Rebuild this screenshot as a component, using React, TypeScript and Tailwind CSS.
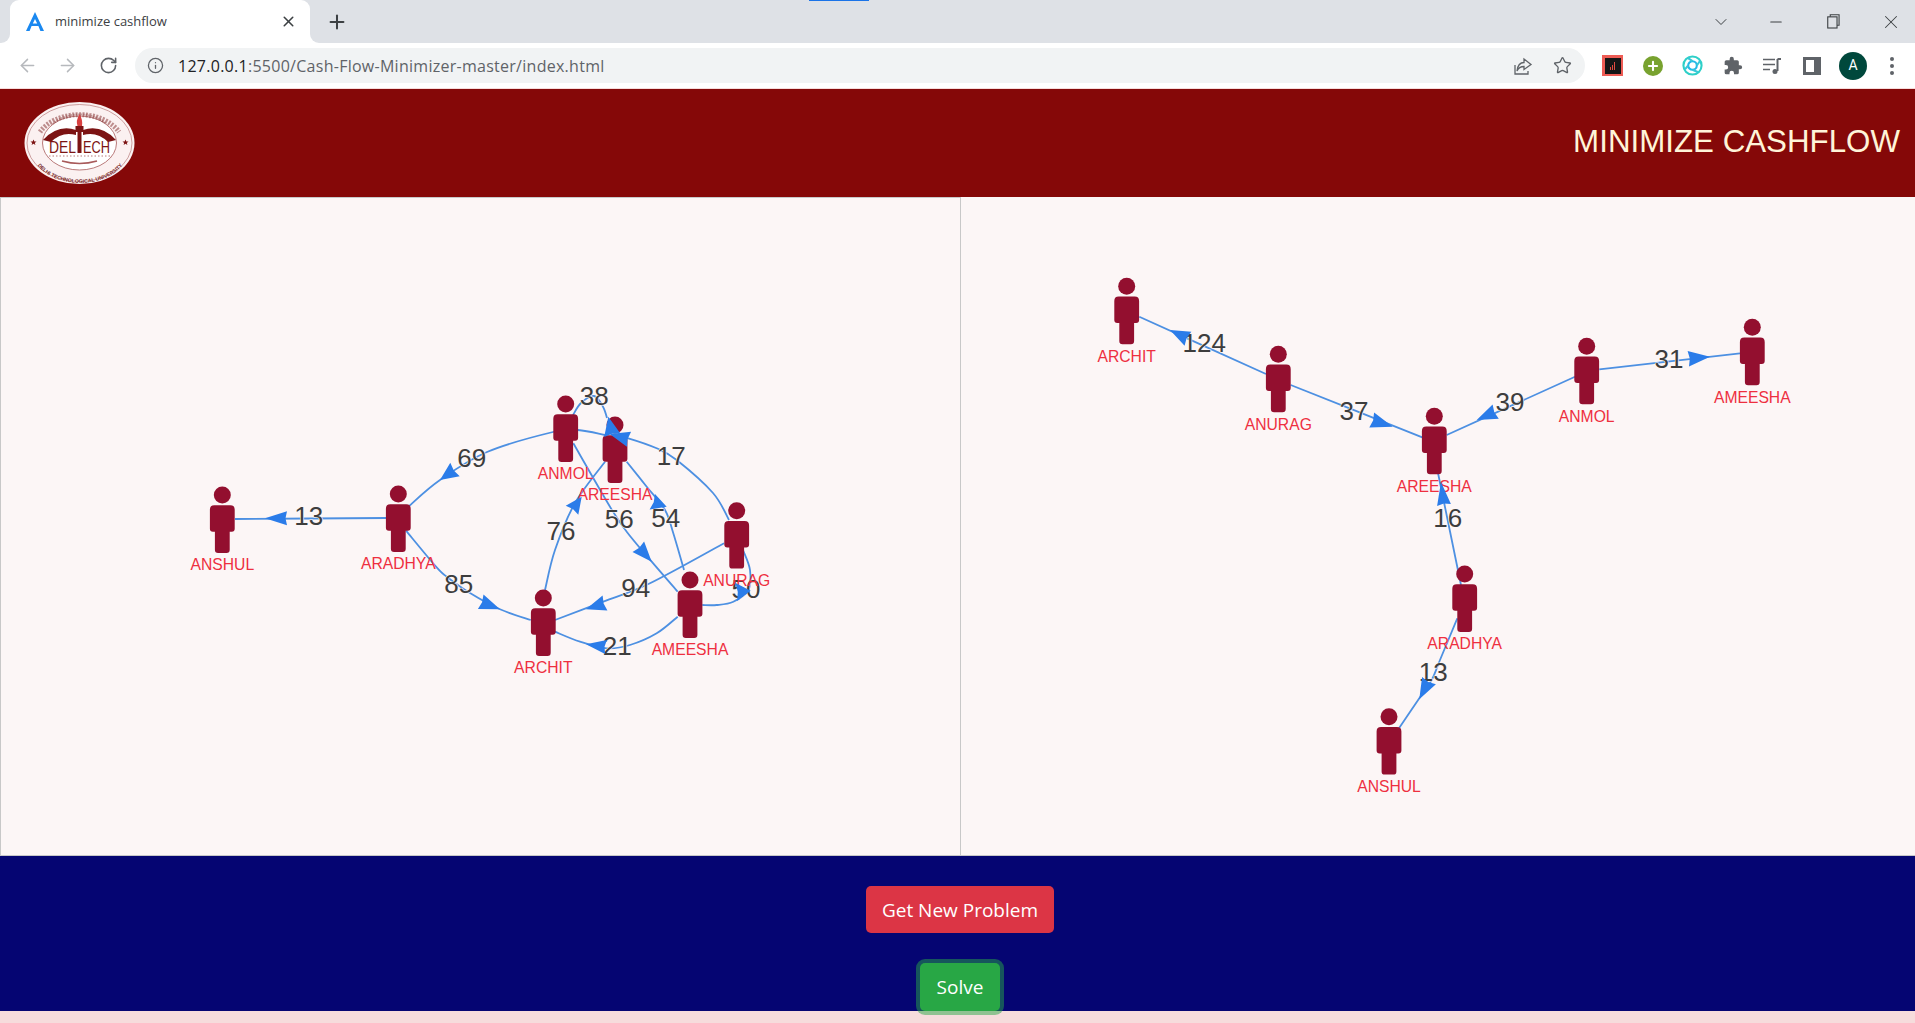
import React from "react";
import { ArrowLeft, ArrowRight, RotateCw, Info, Star, X, Plus, ChevronDown, Minus } from "lucide-react";

type P = [number, number];
const EDGE = "#4d90e2";
const ARROW = "#2b7ce9";

function smooth(pts: P[]): string {
  let d = `M${pts[0][0]} ${pts[0][1]}`;
  for (let i = 0; i < pts.length - 1; i++) {
    const p0 = pts[Math.max(i - 1, 0)];
    const p1 = pts[i];
    const p2 = pts[i + 1];
    const p3 = pts[Math.min(i + 2, pts.length - 1)];
    const c1: P = [p1[0] + (p2[0] - p0[0]) / 6, p1[1] + (p2[1] - p0[1]) / 6];
    const c2: P = [p2[0] - (p3[0] - p1[0]) / 6, p2[1] - (p3[1] - p1[1]) / 6];
    d += ` C${c1[0]} ${c1[1]} ${c2[0]} ${c2[1]} ${p2[0]} ${p2[1]}`;
  }
  return d;
}

function arrowPoints(tip: P, base: P, w = 15.5): string {
  const dx = tip[0] - base[0];
  const dy = tip[1] - base[1];
  const l = Math.hypot(dx, dy) || 1;
  const ux = dx / l;
  const uy = dy / l;
  const nx = -uy;
  const ny = ux;
  const h = w / 2;
  const a: P = [base[0] + nx * h, base[1] + ny * h];
  const b: P = [base[0] - nx * h, base[1] - ny * h];
  const notch: P = [base[0] + ux * 1.5, base[1] + uy * 1.5];
  return [tip, a, notch, b].map((p) => `${p[0].toFixed(1)},${p[1].toFixed(1)}`).join(" ");
}

interface Edge {
  pts: P[];
  tip: P;
  base: P;
  label: string;
  at: P;
  w?: number;
}
interface Node {
  name: string;
  x: number;
  y: number;
}

function Person({ name, x, y }: Node) {
  return (
    <g>
      <circle cx={x} cy={y} r={8.5} fill="#930f2f" />
      <path
        d={`M${x - 8} ${y + 10.3} H${x + 8} Q${x + 12.4} ${y + 10.3} ${x + 12.4} ${y + 14.7} V${y + 33.7} Q${x + 12.4} ${y + 36.7} ${x + 9.4} ${y + 36.7} H${x + 7.4} V${y + 54.7} Q${x + 7.4} ${y + 57.9} ${x + 4.2} ${y + 57.9} H${x - 4.2} Q${x - 7.4} ${y + 57.9} ${x - 7.4} ${y + 54.7} V${y + 36.7} H${x - 9.4} Q${x - 12.4} ${y + 36.7} ${x - 12.4} ${y + 33.7} V${y + 14.7} Q${x - 12.4} ${y + 10.3} ${x - 8} ${y + 10.3} Z`}
        fill="#930f2f"
      />
      <text x={x} y={y + 75.3} textAnchor="middle" fontSize={15.7} fill="#ee2f3f">
        {name}
      </text>
    </g>
  );
}

function Graph({ nodes, edges, viewBox, className }: { nodes: Node[]; edges: Edge[]; viewBox: string; className: string }) {
  return (
    <svg viewBox={viewBox} className={className}>
      {edges.map((e, i) => (
        <path key={i} d={smooth(e.pts)} fill="none" stroke={EDGE} strokeWidth={1.8} />
      ))}
      {edges.map((e, i) => (
        <text
          key={i}
          x={e.at[0]}
          y={e.at[1] + 9}
          textAnchor="middle"
          fontSize={26}
          fill="#3d3d3d"
          stroke="#fcf6f6"
          strokeWidth={1.2}
          paintOrder="stroke"
        >
          {e.label}
        </text>
      ))}
      {nodes.map((n) => (
        <Person key={n.name} {...n} />
      ))}
      {edges.map((e, i) => (
        <polygon key={i} points={arrowPoints(e.tip, e.base, e.w)} fill={ARROW} />
      ))}
    </svg>
  );
}

const leftNodes: Node[] = [
  { name: "ANSHUL", x: 222.3, y: 495 },
  { name: "ARADHYA", x: 398.3, y: 494 },
  { name: "ANMOL", x: 565.7, y: 404 },
  { name: "AREESHA", x: 615, y: 425 },
  { name: "ANURAG", x: 736.7, y: 510.7 },
  { name: "AMEESHA", x: 690, y: 580 },
  { name: "ARCHIT", x: 543.3, y: 598 },
];

const leftEdges: Edge[] = [
  { pts: [[235, 519], [386, 518]], tip: [265, 518.3], base: [287, 518.3], label: "13", at: [308.7, 516], w: 14 },
  { pts: [[409, 506], [440, 480], [487, 452], [553, 432], [578, 430], [605, 435]], tip: [440, 480], base: [455, 469.5], label: "69", at: [471.7, 457.7], w: 16.5 },
  { pts: [[406, 530.7], [436, 566.7], [446.7, 576.7], [470, 593], [500, 609.3], [530.7, 620]], tip: [500, 609.3], base: [480.7, 601.7], label: "85", at: [458.7, 584] },
  { pts: [[545, 590], [555, 550], [575, 503], [605, 461.7]], tip: [581.7, 496.7], base: [572, 510.3], label: "76", at: [561, 531] },
  { pts: [[573.3, 443.3], [610, 506.7], [626.7, 531.7], [651.7, 561.7], [677.7, 591.7]], tip: [651.7, 561.7], base: [638.3, 546.7], label: "56", at: [619.3, 519] },
  { pts: [[626.7, 461.7], [646.7, 486.7], [665, 510], [673.3, 533.3], [684, 570]], tip: [666.7, 506.7], base: [652.3, 501.7], label: "54", at: [665.7, 517.7], w: 16.5 },
  { pts: [[573, 415], [581, 403], [594, 396], [603, 406.7], [607, 418]], tip: [608.3, 416.7], base: [612.3, 435.3], label: "38", at: [594.3, 395.7], w: 16.5 },
  { pts: [[729, 520], [713, 493], [676.7, 460], [656.7, 448.3], [628.3, 438.3], [612, 435]], tip: [609.7, 434], base: [629, 439.3], label: "17", at: [671.3, 456] },
  { pts: [[724, 543.3], [650, 583.3], [603.3, 601.7], [555, 620]], tip: [586, 609.3], base: [605, 603], label: "94", at: [635.7, 588.3] },
  { pts: [[677.7, 616.7], [656.7, 633.3], [630, 645], [606.7, 648.3], [580, 641.7], [555, 631.7]], tip: [586, 644.3], base: [606, 647], label: "21", at: [617.3, 645.7], w: 14 },
  { pts: [[743.3, 550.7], [750, 570], [748.3, 590], [733.3, 601.7], [716.7, 605], [702.3, 605]], tip: [750.7, 590.7], base: [736.3, 592], label: "50", at: [746, 589.3], w: 18 },
];

const rightNodes: Node[] = [
  { name: "ARCHIT", x: 1126.7, y: 286.3 },
  { name: "ANURAG", x: 1278.3, y: 354.3 },
  { name: "AREESHA", x: 1434.3, y: 416.3 },
  { name: "ANMOL", x: 1586.7, y: 346.3 },
  { name: "AMEESHA", x: 1752.3, y: 327.3 },
  { name: "ARADHYA", x: 1464.7, y: 574 },
  { name: "ANSHUL", x: 1389, y: 716.7 },
];

const rightEdges: Edge[] = [
  { pts: [[1139.3, 316.7], [1266, 374]], tip: [1170, 330], base: [1188, 338.7], label: "124", at: [1204.3, 342.7] },
  { pts: [[1290.7, 385], [1422.3, 437.3]], tip: [1392.7, 426.7], base: [1371.7, 420], label: "37", at: [1354, 411] },
  { pts: [[1446.7, 435], [1575, 376.7]], tip: [1476.7, 420], base: [1495.7, 411.7], label: "39", at: [1510, 402] },
  { pts: [[1599.3, 369.3], [1740, 353.3]], tip: [1710, 356.7], base: [1688.3, 358.7], label: "31", at: [1669, 358.7] },
  { pts: [[1461, 585], [1438, 473]], tip: [1441, 482], base: [1444, 505], label: "16", at: [1447.7, 518.3], w: 14 },
  { pts: [[1457.3, 618.3], [1440, 660], [1431.7, 680], [1419.3, 698.3], [1399, 728.3]], tip: [1419.3, 699.3], base: [1429, 680.7], label: "13", at: [1433.3, 672.3] },
];

function LogoStar({ x, y }: { x: number; y: number }) {
  return (
    <polygon
      points={`${x},${y - 3} ${x + 0.9},${y - 0.9} ${x + 3},${y - 0.9} ${x + 1.3},${y + 0.5} ${x + 1.9},${y + 2.6} ${x},${y + 1.3} ${x - 1.9},${y + 2.6} ${x - 1.3},${y + 0.5} ${x - 3},${y - 0.9} ${x - 0.9},${y - 0.9}`}
      fill="#7c1414"
    />
  );
}

function Logo() {
  return (
    <svg viewBox="0 0 120 90" className="w-[120px] h-[90px]">
      <defs>
        <path id="logo-bottom" d="M11 50 A49 35 0 0 0 109 50" />
      </defs>
      <ellipse cx="59.5" cy="45" rx="55" ry="41" fill="#fbf1f1" />
      <ellipse cx="59.5" cy="45" rx="52.5" ry="38.5" fill="none" stroke="#b77a7a" strokeWidth="0.7" />
      <ellipse cx="59.5" cy="45" rx="37" ry="27" fill="#ffffff" stroke="#a85a5a" strokeWidth="0.8" />
      <path d="M20 34 A44 31 0 0 1 99 34" fill="none" stroke="#8a3a3a" strokeWidth="5" strokeDasharray="2 1.4" opacity="0.55" />
      <path d="M33 26 A32 22 0 0 1 86 26" fill="none" stroke="#8a3a3a" strokeWidth="1.8" strokeDasharray="1.5 1" opacity="0.45" />
      <text fontSize="5.2" fill="#7a2a2a" fontWeight="700" textAnchor="middle">
        <textPath href="#logo-bottom" startOffset="50%">DELHI TECHNOLOGICAL UNIVERSITY</textPath>
      </text>
      <path d="M23 42 Q38 26 56 32 L56 37 Q42 33 31 44 Z" fill="#7c1414" />
      <path d="M96 42 Q81 26 63 32 L63 37 Q77 33 88 44 Z" fill="#7c1414" />
      <path d="M59.5 16 Q55.5 23 57.5 28 H62 Q63 22 59.5 16 Z" fill="#d84040" />
      <rect x="55.5" y="28" width="8" height="6" fill="#7c1414" />
      <path d="M57.5 34 H61.5 V55 H57.5 Z" fill="#7c1414" />
      <text x="29" y="55" fontSize="16" fill="#7c1414" textLength="27" lengthAdjust="spacingAndGlyphs">DEL</text>
      <text x="63" y="55" fontSize="16" fill="#7c1414" textLength="27" lengthAdjust="spacingAndGlyphs">ECH</text>
      <path d="M29 58 H90" fill="none" stroke="#b77a7a" strokeWidth="1" strokeDasharray="1.5 2" />
      <path d="M42 63 Q59.5 68 77 63" fill="none" stroke="#a85a5a" strokeWidth="1.6" />
      <LogoStar x={13.5} y={44.5} />
      <LogoStar x={105.5} y={44.5} />
    </svg>
  );
}

function Favicon() {
  return (
    <svg viewBox="0 0 20 20" className="w-5 h-5 shrink-0">
      <path d="M10 0 L1 19 H4.6 L6.6 14 H13.4 L15.4 19 H19 L10 0 Z M10 7 L12.2 11.4 H7.8 Z" fill="#1a88f0" fillRule="evenodd" />
    </svg>
  );
}

export default function App() {
  return (
    <div className="w-[1915px] h-[1023px] overflow-hidden flex flex-col bg-[#f6dcdc] font-['Liberation_Sans',sans-serif]">
      {/* tab strip */}
      <div className="h-[43px] shrink-0 bg-[#dee1e6] flex items-end relative">
        <div className="ml-[10px] w-[300px] h-[43px] bg-white rounded-t-[9px] flex items-center pl-[15px] pr-[13px] relative">
          <div className="absolute left-[-9px] bottom-0 w-[9px] h-[9px] bg-white">
            <div className="w-full h-full bg-[#dee1e6] rounded-br-[9px]" />
          </div>
          <div className="absolute right-[-9px] bottom-0 w-[9px] h-[9px] bg-white">
            <div className="w-full h-full bg-[#dee1e6] rounded-bl-[9px]" />
          </div>
          <Favicon />
          <span className="ml-[10px] flex-1 text-[13px] text-[#3c4043] font-['Open_Sans',sans-serif] whitespace-nowrap">minimize cashflow</span>
          <X size={17} strokeWidth={2.2} className="text-[#3c4043]" />
        </div>
        <div className="ml-[16px] h-[43px] flex items-center">
          <Plus size={22} strokeWidth={2.2} className="text-[#3c4043]" />
        </div>
        <div className="absolute left-[809px] top-0 w-[60px] h-px bg-[#1a73e8]" />
        <div className="ml-auto h-[43px] flex items-center text-[#3c4043]">
          <ChevronDown size={20} strokeWidth={1.2} className="mr-[36px]" />
          <Minus size={18} strokeWidth={1.4} className="mr-[42px]" />
          <svg viewBox="0 0 14 16" className="w-[13px] h-[15px] mr-[40px]" fill="none" stroke="#3c4043" strokeWidth="1.2">
            <rect x="0.8" y="3" width="10" height="12" />
            <path d="M3.5 3 V0.8 H13 V12 H10.8" />
          </svg>
          <X size={22} strokeWidth={1.1} className="mr-[13px]" />
        </div>
      </div>

      {/* toolbar */}
      <div className="h-[45px] shrink-0 bg-white flex items-center">
        <ArrowLeft size={21} strokeWidth={1.7} className="ml-[17px] text-[#b6b9bd]" />
        <ArrowRight size={21} strokeWidth={1.7} className="ml-[19px] text-[#b6b9bd]" />
        <RotateCw size={19} strokeWidth={2} className="ml-[21px] text-[#5f6368]" />
        <div className="ml-[17px] w-[1450px] h-[35px] rounded-full bg-[#f1f3f4] flex items-center pl-[12px]">
          <Info size={17} strokeWidth={1.8} className="text-[#5f6368]" />
          <span className="ml-[14px] text-[16px] font-['Open_Sans',sans-serif] text-[#5f6368] tracking-[0.27px] whitespace-nowrap">
            <span className="text-[#202124]">127.0.0.1</span>:5500/Cash-Flow-Minimizer-master/index.html
          </span>
          <svg viewBox="0 0 20 20" className="ml-auto w-5 h-5" fill="none" stroke="#5f6368" strokeWidth="1.3">
            <path d="M2 9 V18 H15 V15" />
            <path d="M11 3 L18 8.5 L11 13.5 V10.5 Q6 10.5 4 15 Q5 6.5 11 6.5 Z" />
          </svg>
          <Star size={19} strokeWidth={1.7} className="ml-[20px] mr-[13px] text-[#5f6368]" />
        </div>
        <div className="ml-[17px] w-[21px] h-[21px] bg-[#ee5c55] flex items-center justify-center">
          <div className="w-[16px] h-[16px] bg-[#161616] flex items-end justify-center gap-px pb-[4px]">
            <span className="w-px h-[3px] bg-[#e04a40]" />
            <span className="w-px h-[5px] bg-[#e04a40]" />
            <span className="w-px h-[8px] bg-[#e04a40]" />
          </div>
        </div>
        <div className="ml-[20px] w-5 h-5 rounded-full bg-[#78a22f] flex items-center justify-center">
          <Plus size={14} strokeWidth={3.6} className="text-white" />
        </div>
        <svg viewBox="0 0 22 22" className="ml-[19px] w-[21px] h-[21px]" fill="none" strokeWidth="2.2">
          <circle cx="11" cy="11" r="9.5" stroke="#2ed0c8" />
          <circle cx="11" cy="11" r="4.5" stroke="#22b8e8" />
          <path d="M6 3 L11 6.5 M19 6 L15.5 11 M17 18 L11 15.5 M3 15 L6.5 11" stroke="#38c8d8" />
        </svg>
        <svg viewBox="0 0 24 24" className="ml-[20px] w-5 h-5" fill="#5f6368">
          <path d="M20.5 11H19V7a2 2 0 0 0-2-2h-4V3.5a2.5 2.5 0 0 0-5 0V5H4a2 2 0 0 0-2 2v3.8h1.5a2.7 2.7 0 0 1 0 5.4H2V20a2 2 0 0 0 2 2h3.8v-1.5a2.7 2.7 0 0 1 5.4 0V22H17a2 2 0 0 0 2-2v-4h1.5a2.5 2.5 0 0 0 0-5z" />
        </svg>
        <svg viewBox="0 0 20 20" className="ml-[19px] w-5 h-5" fill="none" stroke="#5f6368" strokeWidth="1.6">
          <path d="M1 3.5 H13 M1 8.5 H13 M1 13.5 H8" />
          <path d="M15.5 3 V15" strokeWidth="2" />
          <path d="M15.5 3 H19" strokeWidth="2" />
          <circle cx="13" cy="15.5" r="2.5" fill="#5f6368" stroke="none" />
        </svg>
        <div className="ml-[21px] w-[18px] h-[18px] border-[3px] border-r-[7px] border-[#5f6368]" />
        <div className="ml-[18px] w-7 h-7 rounded-full bg-[#00483c] flex items-center justify-center text-white text-[14px] font-['Roboto',sans-serif]">A</div>
        <div className="ml-[23px] flex flex-col gap-[3px]">
          <span className="w-[4px] h-[4px] rounded-full bg-[#5f6368]" />
          <span className="w-[4px] h-[4px] rounded-full bg-[#5f6368]" />
          <span className="w-[4px] h-[4px] rounded-full bg-[#5f6368]" />
        </div>
      </div>
      <div className="h-px shrink-0" />

      {/* header */}
      <header className="h-[108px] shrink-0 bg-[#850808] flex items-center justify-between pl-[20px] pr-[15px]">
        <Logo />
        <h1 className="text-[31.3px] text-[#fff4d8] font-normal leading-none pb-[2px]">MINIMIZE CASHFLOW</h1>
      </header>

      {/* graphs */}
      <main className="h-[659px] shrink-0 flex bg-[#fcf6f6] border-b border-[#c8c8c8]">
        <div className="w-[961px] h-full border-l border-t border-r border-[#c8c8c8]">
          <Graph nodes={leftNodes} edges={leftEdges} viewBox="1 198 959 657" className="block w-[959px] h-[657px]" />
        </div>
        <div className="w-[954px] h-full">
          <Graph nodes={rightNodes} edges={rightEdges} viewBox="961 197 954 658" className="block w-[954px] h-[658px]" />
        </div>
      </main>

      {/* footer */}
      <footer className="h-[155px] shrink-0 bg-[#050572] flex flex-col items-center pt-[30px] pl-[5px] gap-[30px]">
        <button className="w-[188px] h-[47px] pt-[1px] rounded-[5px] bg-[#dc3545] text-white text-[19px] font-['Open_Sans',sans-serif]">
          Get New Problem
        </button>
        <button className="w-[80px] h-[48px] pt-[1px] rounded-[5px] bg-[#28a745] text-white text-[19px] font-['Open_Sans',sans-serif] ring-4 ring-[#28a745]/50 relative">
          Solve
        </button>
      </footer>
    </div>
  );
}
